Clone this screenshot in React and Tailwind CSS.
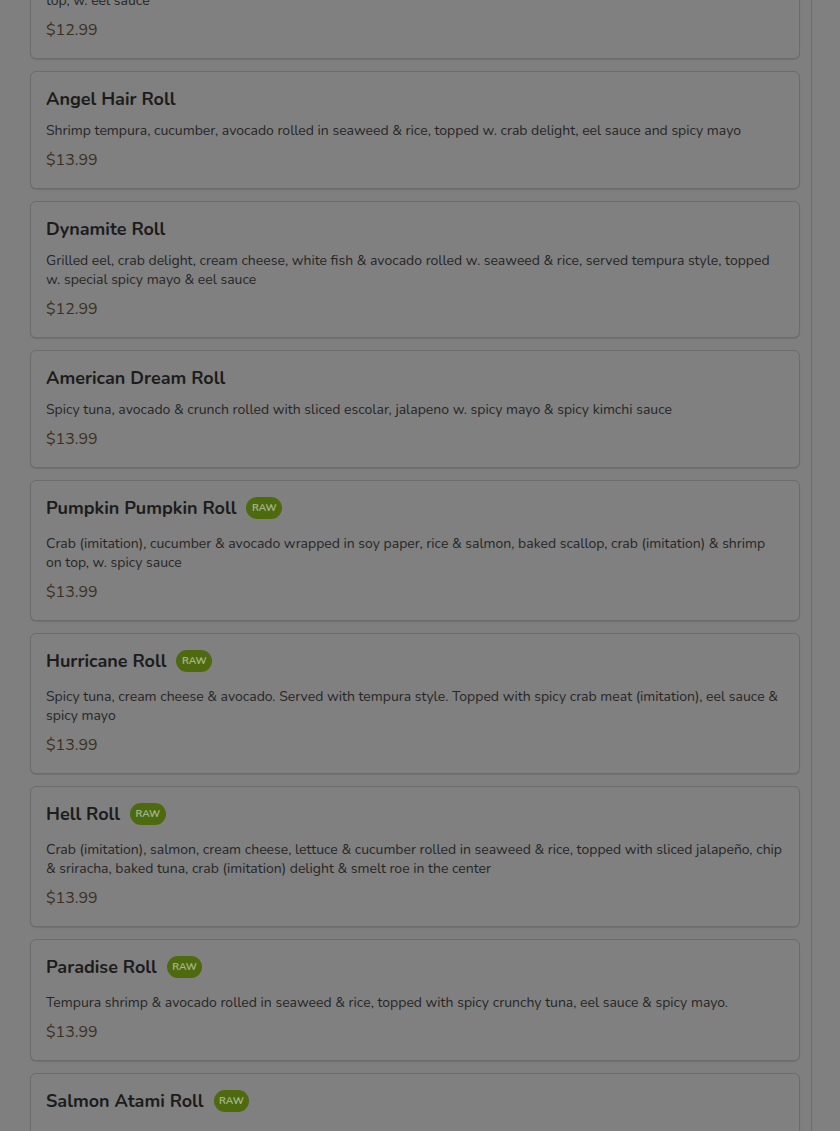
const ITEMS = [
  {
    name: 'Rainbow Dragon Roll',
    desc: 'Shrimp tempura, cucumber & cream cheese rolled in seaweed & rice, topped with sliced avocado, crab meat & eel on top, w. eel sauce',
    price: '$12.99',
  },
  {
    name: 'Angel Hair Roll',
    desc: 'Shrimp tempura, cucumber, avocado rolled in seaweed & rice, topped w. crab delight, eel sauce and spicy mayo',
    price: '$13.99',
  },
  {
    name: 'Dynamite Roll',
    desc: 'Grilled eel, crab delight, cream cheese, white fish & avocado rolled w. seaweed & rice, served tempura style, topped w. special spicy mayo & eel sauce',
    price: '$12.99',
  },
  {
    name: 'American Dream Roll',
    desc: 'Spicy tuna, avocado & crunch rolled with sliced escolar, jalapeno w. spicy mayo & spicy kimchi sauce',
    price: '$13.99',
  },
  {
    name: 'Pumpkin Pumpkin Roll',
    raw: true,
    desc: 'Crab (imitation), cucumber & avocado wrapped in soy paper, rice & salmon, baked scallop, crab (imitation) & shrimp on top, w. spicy sauce',
    price: '$13.99',
  },
  {
    name: 'Hurricane Roll',
    raw: true,
    desc: 'Spicy tuna, cream cheese & avocado. Served with tempura style. Topped with spicy crab meat (imitation), eel sauce & spicy mayo',
    price: '$13.99',
  },
  {
    name: 'Hell Roll',
    raw: true,
    desc: 'Crab (imitation), salmon, cream cheese, lettuce & cucumber rolled in seaweed & rice, topped with sliced jalapeño, chip & sriracha, baked tuna, crab (imitation) delight & smelt roe in the center',
    price: '$13.99',
  },
  {
    name: 'Paradise Roll',
    raw: true,
    desc: 'Tempura shrimp & avocado rolled in seaweed & rice, topped with spicy crunchy tuna, eel sauce & spicy mayo.',
    price: '$13.99',
  },
  {
    name: 'Salmon Atami Roll',
    raw: true,
    desc: 'Salmon, avocado & cucumber rolled in seaweed & rice, topped with torched salmon & special sauce',
    price: '$13.99',
  },
]

function MenuCard({ item }) {
  return (
    <div className="bg-[#808080] border border-[#6c6c6c] rounded-md shadow-[0_1px_1px_rgba(0,0,0,0.12)] pl-[15px] pr-4 pt-4 pb-4">
      {/* Title */}
      <div className={item.raw ? 'flex items-center gap-2.5 h-[22px] mb-[15px]' : 'flex items-center gap-2.5 h-[22px] mb-[11px]'}>
        <span className="text-[18px] font-bold leading-[22px] text-[#1c1c1c]">{item.name}</span>
        {item.raw && (
          <span className="text-[10px] font-bold uppercase leading-3 text-[#a3b38a] bg-[#4d6a0e] rounded-full px-[5.5px] py-[5px]">
            Raw
          </span>
        )}
      </div>

      {/* Description */}
      <p className="text-[14px] leading-[19px] text-[#262626]">{item.desc}</p>

      {/* Price */}
      <div className="text-[16px] leading-6 text-[#3b3020] mt-[8px]">{item.price}</div>
    </div>
  )
}

export default function App() {
  return (
    <div className="h-[1131px] overflow-hidden bg-[#7f7f7f] flex" style={{ fontFamily: '"Nunito", "Open Sans", sans-serif' }}>
      <div className="w-[811px] pl-[30px] pr-[11px]">
        <div className="flex flex-col gap-3 -mt-[78px]">
          {ITEMS.map(item => (
            <MenuCard key={item.name} item={item} />
          ))}
        </div>
      </div>
      <div className="flex-1 border-l border-[#6e6e6e] bg-[#808080]" />
    </div>
  )
}
